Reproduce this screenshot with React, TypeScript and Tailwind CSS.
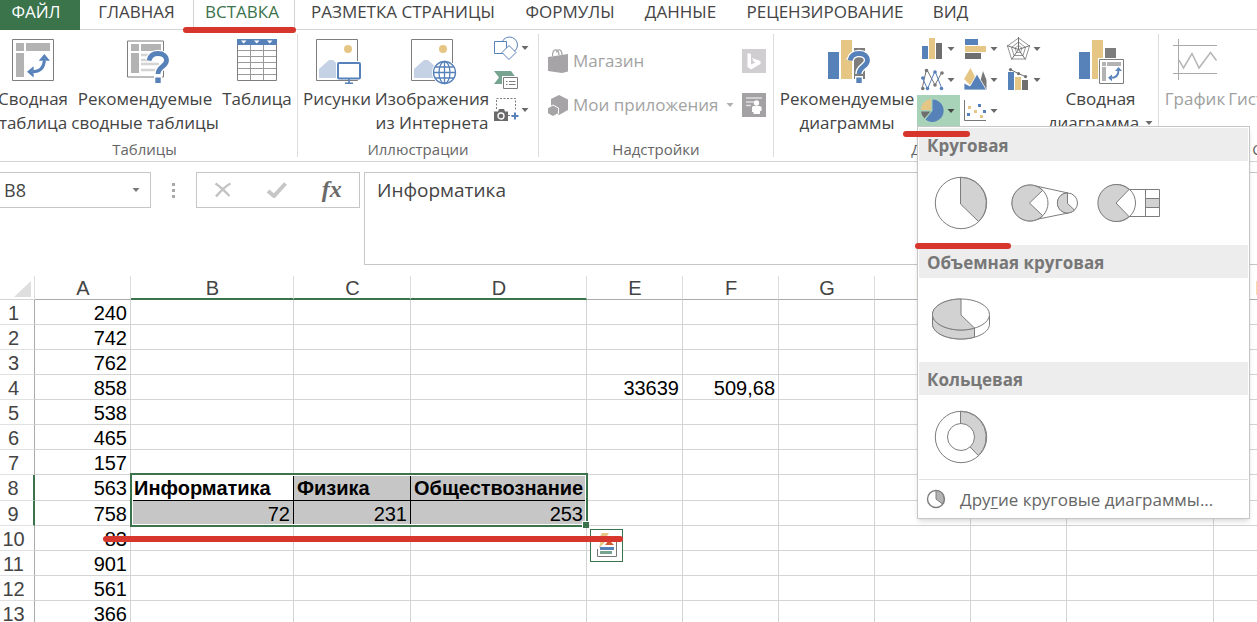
import type { ReactNode } from 'react';

const BLUE = '#5681b9';
const TAN = '#e6c685';
const GRAY = '#7d7d7d';
const LIGHT = '#b3b3b3';

type DrawingProps = { box: string; w: number; h: number; children: ReactNode };

function Drawing({ box, w, h, children }: DrawingProps) {
  return (
    <svg viewBox={box} width={w} height={h} className="shrink-0" fill="none" aria-hidden="true">
      {children}
    </svg>
  );
}

function Caret({ color = '#6a6a6a' }: { color?: string }) {
  return (
    <Drawing box="0 0 8 4" w={8} h={4}>
      <path d="M0.5 0h7L4 4z" fill={color} />
    </Drawing>
  );
}

function SwapArrows({ x, y, s }: { x: number; y: number; s: number }) {
  return (
    <g transform={`translate(${x} ${y}) scale(${s})`}>
      <path d="M5 17.5C13 17.5 17 13 17 5" stroke={BLUE} strokeWidth="3" />
      <path d="M11.5 6.5L17 0l5.500 6.500h-3.500L17 4.500 15 6.500z" fill={BLUE} />
      <path d="M6.500 12L0 17.500l6.500 5.500v-3.500L4.500 17.500l2-2z" fill={BLUE} />
    </g>
  );
}

function Question({ x, y }: { x: number; y: number }) {
  const hook = 'M3 9.500C4 5 7.500 2.500 12 2.500c5 0 8.500 2.500 8.500 7 0 6-8.500 6-8.500 13.500';
  return (
    <g transform={`translate(${x} ${y})`}>
      <path d={hook} stroke="#fff" strokeWidth="7.500" />
      <path d="M8 25h8v8H8z" fill="#fff" />
      <path d={hook} stroke={BLUE} strokeWidth="4.800" />
      <path d="M9.300 26.500h5.400V32H9.300z" fill={BLUE} />
    </g>
  );
}

function PivotIcon() {
  return (
    <Drawing box="0 0 42 42" w={42} h={42}>
      <path d="M.5.5h41v41H.5z" fill="#fff" stroke={GRAY} />
      <path d="M4 4h8v8H4zM14 4h24v8H14zM4 14h8v24H4z" fill={LIGHT} />
      <SwapArrows x={15} y={15} s={1.02} />
    </Drawing>
  );
}

function RecommendedPivotIcon() {
  return (
    <Drawing box="0 0 50 46" w={50} h={46}>
      <path d="M7.500 2h36v36h-36z" fill="#fff" stroke={GRAY} />
      <path d="M11 5h8v7h-8zM21 5h20v7H21zM11 14h8v20h-8z" fill={LIGHT} />
      <path d="M21 16h20M21 21h12M21 25h18M21 31h20" stroke="#d4d4d4" strokeWidth="2.500" />
      <Question x={26} y={12} />
    </Drawing>
  );
}

function TableIcon() {
  return (
    <Drawing box="0 0 40 42" w={40} h={42}>
      <path d="M.5.5h39v41H.5z" fill="#fff" stroke={GRAY} />
      <path d="M0 0h40v6H0z" fill={BLUE} />
      <path d="M4 1.500h5.500L6.700 4.500zM17 1.500h5.500l-2.700 3zM30 1.500h5.500l-2.700 3z" fill="#fff" />
      <path d="M1 11.500h38M1 17.500h38M1 23.500h38M1 29.500h38M1 35.500h38M13.500 6v35M26.500 6v35" stroke="#9a9a9a" />
    </Drawing>
  );
}

function PictureFrame() {
  return (
    <>
      <path d="M.5.5h41v41H.5z" fill="#fff" stroke={GRAY} />
      <circle cx="32" cy="10" r="4" fill={TAN} />
      <path d="M3 39V30l10-9h4l14 13v5z" fill="#c5d2e5" />
    </>
  );
}

function PicturesIcon() {
  return (
    <Drawing box="-4 0 50 46" w={50} h={46}>
      <PictureFrame />
      <path d="M20 22h26v19H20z" fill="#fff" />
      <rect x="22" y="24" width="22" height="15.500" rx="1" fill="#fff" stroke={BLUE} strokeWidth="2" />
      <path d="M33 40v4M29 44.300h8" stroke={BLUE} strokeWidth="1.600" />
    </Drawing>
  );
}

function OnlinePicturesIcon() {
  return (
    <Drawing box="-4 0 50 46" w={50} h={46}>
      <PictureFrame />
      <circle cx="33.500" cy="33.500" r="12.500" fill="#fff" />
      <g stroke={BLUE} strokeWidth="1.300">
        <circle cx="33.500" cy="33.500" r="11" />
        <ellipse cx="33.500" cy="33.500" rx="5.500" ry="11" />
        <path d="M33.500 22.500v22M22.500 33.500h22M24.500 28h18M24.500 39h18" />
      </g>
    </Drawing>
  );
}

function ShapesIcon() {
  return (
    <Drawing box="0 -1 25 25" w={25} h={25}>
      <circle cx="15.500" cy="9" r="8" stroke={BLUE} />
      <path d="M.5 5.500h12v12H.5z" fill="#fff" stroke={BLUE} />
      <path d="M15 9.500l7 7-7 7-7-7z" fill="#fff" stroke={BLUE} />
    </Drawing>
  );
}

function SmartArtIcon() {
  return (
    <Drawing box="0 -1 25 25" w={25} h={25}>
      <path d="M0 4h17l4.500 6H9v7H0l5-6.500z" fill="#76a491" />
      <path d="M8 9h17v14H8z" fill="#fff" />
      <path d="M9.500 10.500h14v11h-14z" fill="#fff" stroke={GRAY} />
      <path d="M12 14.500h1.500M15 14.500h6.500M12 17.500h1.500M15 17.500h6.500" stroke={GRAY} />
    </Drawing>
  );
}

function ScreenshotIcon() {
  return (
    <Drawing box="0 0 25 25" w={25} h={25}>
      <path d="M2.500 12V1.500h19V14M14 18.500h4" stroke={GRAY} strokeDasharray="2 1.500" />
      <path d="M0 14.500h4l1-2.500h5l1 2.500h3V24H0z" fill="#6a6a6a" />
      <circle cx="7" cy="19" r="3" fill="#6a6a6a" stroke="#fff" strokeWidth="1.300" />
      <path d="M21 15.500v7M17.500 19h7" stroke={BLUE} strokeWidth="2" />
    </Drawing>
  );
}

function BagIcon() {
  return (
    <Drawing box="0 0 20 24" w={20} h={24}>
      <path d="M0 8l20-3v17.500l-6 1.500L0 22z" fill="#a6a4a6" />
      <path d="M4.500 7C4.500-1 11-1 11 6M8.500 3.500C9.500-.5 14-.5 14 6" stroke="#a6a4a6" strokeWidth="1.200" />
    </Drawing>
  );
}

function BoxesIcon() {
  return (
    <Drawing box="0 0 20 21" w={20} h={21}>
      <path d="M11 0l9 4.500V15l-9 5-8-5V4z" fill="#a6a4a6" />
      <path d="M5 10l5.500 3v5.500L5 21.500-.5 18.500V13z" fill="#a6a4a6" stroke="#fff" />
    </Drawing>
  );
}

function BingIcon() {
  return (
    <Drawing box="0 0 24 24" w={24} h={24}>
      <path d="M0 0h24v24H0z" fill="#d0ced1" />
      <path d="M5.500 4l3.500 1v10.500l4.500-2-2-1-1.500-3.500 8.500 3v3L9 20.500 5.500 18z" fill="#fff" />
    </Drawing>
  );
}

function PeopleIcon() {
  return (
    <Drawing box="0 0 24 24" w={24} h={24}>
      <path d="M0 0h24v24H0z" fill="#a3a1a4" />
      <path d="M4 5h16M4 9h8M4 12.500h5" stroke="#dedede" strokeWidth="1.700" />
      <circle cx="14.500" cy="10" r="2.700" fill="#fff" />
      <path d="M10 19v-4.500c0-1 1-1.500 2-1.500h5c1 0 2.500.5 2.500 1.500V18H18v3h-6.500v-4.500V19z" fill="#fff" />
    </Drawing>
  );
}

function RecommendedChartsIcon() {
  return (
    <Drawing box="0 0 50 46" w={50} h={46}>
      <path d="M6 13h11v27H6z" fill={BLUE} />
      <path d="M19 1h11v39H19z" fill={TAN} />
      <path d="M32 9h11v31H32z" fill={GRAY} />
      <Question x={25} y={12} />
    </Drawing>
  );
}

function PivotChartIcon() {
  return (
    <Drawing box="0 0 46 46" w={46} h={46}>
      <path d="M1 13h11v27H1z" fill={BLUE} />
      <path d="M14 1h11v39H14z" fill={TAN} />
      <path d="M27 9h11v14H27z" fill={GRAY} />
      <path d="M20 19h26v26H20z" fill="#fff" />
      <path d="M21.500 20.500h24v24h-24z" fill="#fff" stroke={GRAY} />
      <path d="M24 23h4v4h-4zM29 23h14v4H29zM24 28h4v14h-4z" fill={LIGHT} />
      <SwapArrows x={30} y={28} s={0.62} />
    </Drawing>
  );
}

function SparklineIcon() {
  return (
    <Drawing box="0 0 46 42" w={46} h={42}>
      <path d="M1 6.500h44M1 34.500h44M6.500 0v41" stroke="#a9a9a9" />
      <path d="M7 21l4.500 8L20 14.500 27 29 38.500 13.500l6 8" stroke="#b5b5b5" strokeWidth="1.500" />
    </Drawing>
  );
}

function ColumnsIcon() {
  return (
    <Drawing box="0 1 24 24" w={24} h={24}>
      <path d="M1 10h6v13H1z" fill={BLUE} />
      <path d="M8 2h6v21H8z" fill={TAN} />
      <path d="M15 7h6v16h-6z" fill="#6f6f6f" />
    </Drawing>
  );
}

function BarsIcon() {
  return (
    <Drawing box="0 1 24 24" w={24} h={24}>
      <path d="M1 3h13v6H1z" fill={BLUE} />
      <path d="M1 10h21v6H1z" fill={TAN} />
      <path d="M1 17h16v6H1z" fill="#6f6f6f" />
    </Drawing>
  );
}

function RadarIcon() {
  return (
    <Drawing box="0 1 24 24" w={24} h={24}>
      <path d="M11.500 2l11 8-4 13H4.500l-4-13zM11.500 6l7 5.500-2.500 8H7l-2.500-8z" stroke="#949494" />
      <path d="M11.500 9.500l3.500 2.500-1.500 4.500h-4L8 12z" stroke="#a5a5a5" />
      <path d="M11.500 1v12.500L23 9.500M11.500 13.500l7 10M11.500 13.500l-7 10M11.500 13.500L0 9.500" stroke="#6f6f6f" />
    </Drawing>
  );
}

function LinesIcon() {
  return (
    <Drawing box="1 1 24 24" w={24} h={24}>
      <path d="M2 22L6.500 2 15 18 22 5" stroke="#777" />
      <path d="M2 10l5.500 12L15 4l7 18" stroke={BLUE} />
      <g fill="#777">
        <circle cx="2.800" cy="21.500" r="1.800" />
        <circle cx="6.500" cy="3.500" r="1.800" />
        <circle cx="15" cy="18" r="1.800" />
        <circle cx="22" cy="6" r="1.800" />
      </g>
      <g fill={BLUE}>
        <circle cx="2.800" cy="11" r="1.800" />
        <circle cx="7.500" cy="21.500" r="1.800" />
        <circle cx="15" cy="5" r="1.800" />
        <circle cx="21.500" cy="21.500" r="1.800" />
      </g>
    </Drawing>
  );
}

function AreaIcon() {
  return (
    <Drawing box="0 1 24 24" w={24} h={24}>
      <path d="M14 23l5-19 3.500 9v10z" fill="#777" />
      <path d="M0 12L6.500 1 12 12l-6 6z" fill={TAN} />
      <path d="M0 23v-7l6 3 7-12 9.500 16z" fill={BLUE} stroke="#fff" strokeWidth=".8" />
    </Drawing>
  );
}

function ComboIcon() {
  return (
    <Drawing box="0 1 24 24" w={24} h={24}>
      <path d="M1 5h6v18H1z" fill={BLUE} />
      <path d="M8 10h6v13H8z" fill={TAN} />
      <path d="M15 13h6v10h-6z" fill="#6f6f6f" />
      <path d="M3.500 2.600l8 4 7 3" stroke="#6f6f6f" />
      <g fill="#6f6f6f">
        <circle cx="3.500" cy="2.600" r="1.600" />
        <circle cx="11.500" cy="6.600" r="1.600" />
        <circle cx="18.500" cy="9.600" r="1.600" />
      </g>
    </Drawing>
  );
}

function PieIcon() {
  return (
    <Drawing box="2 1 24 24" w={24} h={24}>
      <path d="M13.500 1.500A11.200 11.200 0 1 1 6.500 21.500L13.500 12.700z" fill={BLUE} />
      <path d="M12 1v11H2A11 11 0 0 1 12 1z" fill={TAN} />
      <path d="M2 13.500h9.500L5.500 20.500A11 11 0 0 1 2 13.500z" fill="#6f6f6f" />
    </Drawing>
  );
}

function ScatterIcon() {
  return (
    <Drawing box="0 1 24 24" w={24} h={24}>
      <path d="M.5 2v20.500H22" stroke="#777" />
      <path d="M4 8h3v3H4zM10 12h3v3h-3zM16 17h3v3h-3z" fill={TAN} />
      <path d="M3 15h3v3H3zM14 6h3v3h-3zM19 12h3v3h-3z" fill={BLUE} />
    </Drawing>
  );
}

function PieShape() {
  return (
    <Drawing box="0 0 54 54" w={54} h={54}>
      <circle cx="27" cy="27" r="25.700" fill="#fff" stroke={GRAY} />
      <path d="M26.500 1.300V28l18 17.500A25.700 25.700 0 0 0 26.500 1.300z" fill="#d2d2d2" stroke={GRAY} />
    </Drawing>
  );
}

function PieOfPieShape() {
  return (
    <Drawing box="0 0 68 38" w={68} h={38}>
      <path d="M25 2l32 7M25 35.500l32-6.500" stroke={GRAY} />
      <circle cx="19" cy="19" r="18" fill="#fff" stroke={GRAY} />
      <path d="M31.700 6.300L18.500 19l13.200 12.700A18 18 0 1 1 31.700 6.300z" fill="#d2d2d2" stroke={GRAY} />
      <circle cx="56.500" cy="19" r="10" fill="#fff" stroke={GRAY} />
      <path d="M56.500 9v10.500l7 6.500A10 10 0 1 1 56.500 9z" fill="#d2d2d2" stroke={GRAY} />
    </Drawing>
  );
}

function BarOfPieShape() {
  return (
    <Drawing box="0 0 64 40" w={64} h={40}>
      <circle cx="20" cy="20" r="18.500" fill="#fff" stroke={GRAY} />
      <path d="M32 6.500L19 20l13 13.500A18.500 18.500 0 1 1 32 6.500z" fill="#d2d2d2" stroke={GRAY} />
      <path d="M32 6.500h30.500v27H32M48.500 6.500v27" stroke={GRAY} />
      <path d="M48.500 15.500h14v9h-14z" fill="#d2d2d2" stroke={GRAY} />
    </Drawing>
  );
}

function Pie3dShape() {
  return (
    <Drawing box="0 1 60 44" w={60} h={44}>
      <path d="M1.500 18v9c0 8.500 13 15 28.500 15s28.500-6.500 28.500-15v-9z" fill="#fff" stroke={GRAY} />
      <path d="M1.500 18v9c0 8.500 13 15 28.500 15 5 0 9.500-.7 13.500-2V30z" fill="#d2d2d2" stroke={GRAY} />
      <ellipse cx="30" cy="17.500" rx="28.500" ry="15.500" fill="#fff" stroke={GRAY} />
      <path d="M30 2v16l13.500 13C39 32.500 35 33 30 33 14.300 33 1.500 26 1.500 17.500S14.300 2 30 2z" fill="#d2d2d2" stroke={GRAY} />
    </Drawing>
  );
}

function DonutShape() {
  return (
    <Drawing box="0 0 54 54" w={54} h={54}>
      <circle cx="27" cy="27" r="25.700" fill="#fff" stroke={GRAY} />
      <path d="M26.500 1.300V27l17.800 18.500A25.700 25.700 0 0 0 26.500 1.300z" fill="#d2d2d2" stroke={GRAY} />
      <circle cx="27" cy="27" r="13.500" fill="#fff" stroke={GRAY} />
    </Drawing>
  );
}

function SmallPieShape() {
  return (
    <Drawing box="0 0 20 20" w={20} h={20}>
      <circle cx="10" cy="10" r="8.500" fill="#fff" stroke={GRAY} strokeWidth="1.400" />
      <path d="M10 1.500V10l6.500 5A8.500 8.500 0 0 0 10 1.500z" fill={LIGHT} stroke={GRAY} />
    </Drawing>
  );
}

const tabs = [
  { name: 'ФАЙЛ', look: 'w-20 bg-[#3b734b] pr-2 text-white' },
  { name: 'ГЛАВНАЯ', look: 'w-[113px] border-b border-[#d4d4d4]' },
  { name: 'ВСТАВКА', look: 'w-[102px] border-x border-[#d4d4d4] pr-1 text-[#3b734b]' },
  { name: 'РАЗМЕТКА СТРАНИЦЫ', look: 'w-[216px] border-b border-[#d4d4d4]' },
  { name: 'ФОРМУЛЫ', look: 'w-[118px] border-b border-[#d4d4d4]' },
  { name: 'ДАННЫЕ', look: 'w-[103px] border-b border-[#d4d4d4]' },
  { name: 'РЕЦЕНЗИРОВАНИЕ', look: 'w-[186px] border-b border-[#d4d4d4]' },
  { name: 'ВИД', look: 'w-[65px] border-b border-[#d4d4d4]' },
];

function TabBar() {
  return (
    <nav aria-label="Вкладки" className="flex h-[30px] shrink-0 text-[17px] leading-6">
      {tabs.map((t) => (
        <button key={t.name} type="button" className={`shrink-0 pb-1.5 text-center whitespace-nowrap ${t.look}`}>
          {t.name}
        </button>
      ))}
      <div className="flex-1 border-b border-[#d4d4d4]" />
    </nav>
  );
}

type BigButtonProps = { icon: ReactNode; lines: string[]; width: string; caret?: boolean; muted?: boolean };

function BigButton({ icon, lines, width, caret, muted }: BigButtonProps) {
  return (
    <button
      type="button"
      className={`flex shrink-0 flex-col items-center pt-[9px] text-[17px] leading-6 whitespace-nowrap ${width} ${muted ? 'text-[#a0a0a0]' : ''}`}
    >
      <span className="flex h-12 items-start">{icon}</span>
      {lines.map((line, i) => (
        <span key={line} className="flex items-center gap-1.5">
          {line}
          {caret && i === lines.length - 1 && <Caret />}
        </span>
      ))}
    </button>
  );
}

function SmallButton({ icon, name, caret = true, active = false }: { icon: ReactNode; name: string; caret?: boolean; active?: boolean }) {
  return (
    <button
      type="button"
      aria-label={name}
      className={`flex h-[31px] w-[43px] items-center gap-0.5 pl-1 ${active ? 'bg-[#a8d3b8]' : ''}`}
    >
      {icon}
      {caret && <Caret color={active ? '#444' : '#6a6a6a'} />}
    </button>
  );
}

function Group({ title, width, titleInset = '', children }: { title: string; width: string; titleInset?: string; children: ReactNode }) {
  return (
    <section className={`flex shrink-0 flex-col ${width}`}>
      <div className="flex h-[108px]">{children}</div>
      <h2 className={`text-center text-[15px] leading-6 text-[#666] ${titleInset}`}>{title}</h2>
    </section>
  );
}

function Separator() {
  return <div className="my-1 w-px shrink-0 bg-[#dcdcdc]" />;
}

function MenuHeading({ children }: { children: ReactNode }) {
  return <h3 className="bg-[#ededed] pt-[3px] pl-2 text-[17px] leading-[30px] font-bold text-[#777]">{children}</h3>;
}

function MenuItem({ name, children }: { name: string; children: ReactNode }) {
  return (
    <button type="button" aria-label={name} className="flex size-[84px] items-center justify-center">
      {children}
    </button>
  );
}

function PieMenu() {
  return (
    <div className="absolute top-full left-0 z-20 w-[333px] border border-[#c6c6c6] bg-white p-px text-[#666] shadow-md">
      <MenuHeading>Круговая</MenuHeading>
      <div className="flex">
        <MenuItem name="Круговая"><PieShape /></MenuItem>
        <MenuItem name="Вторичная круговая"><PieOfPieShape /></MenuItem>
        <MenuItem name="Вторичная гистограмма"><BarOfPieShape /></MenuItem>
      </div>
      <MenuHeading>Объемная круговая</MenuHeading>
      <div className="flex">
        <MenuItem name="Объемная круговая"><Pie3dShape /></MenuItem>
      </div>
      <MenuHeading>Кольцевая</MenuHeading>
      <div className="flex">
        <MenuItem name="Кольцевая"><DonutShape /></MenuItem>
      </div>
      <button type="button" className="flex w-full items-center gap-3.5 border-t border-[#e1e1e1] pl-[7px] text-left text-[17px] leading-[35px]">
        <SmallPieShape />
        <span className="pt-0.5">
          Дру<u className="underline-offset-2">г</u>ие круговые диаграммы...
        </span>
      </button>
    </div>
  );
}

function Ribbon() {
  return (
    <div className="flex h-[132px] shrink-0 border-b border-[#d4d4d4]">
      <Group title="Таблицы" width="w-[297px] pr-2">
        <BigButton icon={<PivotIcon />} lines={['Сводная', 'таблица']} width="w-[66px]" />
        <BigButton icon={<RecommendedPivotIcon />} lines={['Рекомендуемые', 'сводные таблицы']} width="w-[158px]" />
        <BigButton icon={<TableIcon />} lines={['Таблица']} width="w-[66px]" />
      </Group>
      <Separator />
      <Group title="Иллюстрации" width="w-60">
        <BigButton icon={<PicturesIcon />} lines={['Рисунки']} width="w-[78px]" />
        <BigButton icon={<OnlinePicturesIcon />} lines={['Изображения', 'из Интернета']} width="w-28" />
        <div className="flex flex-col pt-0.5 pl-0.5">
          <SmallButton icon={<ShapesIcon />} name="Фигуры" />
          <SmallButton icon={<SmartArtIcon />} name="SmartArt" caret={false} />
          <SmallButton icon={<ScreenshotIcon />} name="Снимок" />
        </div>
      </Group>
      <Separator />
      <Group title="Надстройки" width="w-[234px]">
        <div className="flex flex-1 flex-col gap-5 pt-[19px] pr-[7px] pl-[9px] text-[17px] leading-6 text-[#a3a3a3]">
          <div className="flex items-center justify-between">
            <button type="button" className="flex items-center gap-[5px]">
              <BagIcon />
              Магазин
            </button>
            <button type="button" aria-label="Карты Bing"><BingIcon /></button>
          </div>
          <div className="flex items-center justify-between">
            <button type="button" className="flex items-center gap-[5px] whitespace-nowrap">
              <BoxesIcon />
              Мои приложения
            </button>
            <Caret color="#b0b0b0" />
            <button type="button" aria-label="Диаграмма с людьми"><PeopleIcon /></button>
          </div>
        </div>
      </Group>
      <Separator />
      <Group title="Диаграммы" width="w-96" titleInset="pr-6">
        <BigButton icon={<RecommendedChartsIcon />} lines={['Рекомендуемые', 'диаграммы']} width="w-[143px] pl-[3px]" />
        <div className="relative mt-[3px] grid h-[93px] grid-cols-3">
          <SmallButton icon={<ColumnsIcon />} name="Гистограмма" />
          <SmallButton icon={<BarsIcon />} name="Линейчатая" />
          <SmallButton icon={<RadarIcon />} name="Лепестковая" />
          <SmallButton icon={<LinesIcon />} name="График" />
          <SmallButton icon={<AreaIcon />} name="С областями" />
          <SmallButton icon={<ComboIcon />} name="Комбинированная" />
          <SmallButton icon={<PieIcon />} name="Круговая" active />
          <SmallButton icon={<ScatterIcon />} name="Точечная" />
          <PieMenu />
        </div>
        <BigButton icon={<PivotChartIcon />} lines={['Сводная', 'диаграмма']} width="w-[109px]" caret />
      </Group>
      <Separator />
      <Group title="Спарклайны" width="w-[274px] pl-1">
        <BigButton icon={<SparklineIcon />} lines={['График']} width="w-16" muted />
        <BigButton icon={<SparklineIcon />} lines={['Гистограмма']} width="w-[110px]" muted />
      </Group>
    </div>
  );
}

function FormulaBar() {
  return (
    <div className="flex h-[114px] shrink-0 items-start pt-2.5 text-[#444]">
      <div className="flex h-9 w-[151px] items-center border border-l-0 border-[#c6c6c6] pr-2.5">
        <input aria-label="Имя ячейки" defaultValue="B8" className="min-w-0 flex-1 pl-1 text-[18px] leading-7 outline-none" />
        <button type="button" aria-label="Список имен"><Caret color="#777" /></button>
      </div>
      <div className="flex w-[45px] flex-col items-center gap-[3px] pt-[11px]">
        <span className="size-[3px] bg-[#a8a8a8]" />
        <span className="size-[3px] bg-[#a8a8a8]" />
        <span className="size-[3px] bg-[#a8a8a8]" />
      </div>
      <div className="mr-1 flex h-9 w-[164px] items-center justify-around border border-[#c6c6c6]">
        <button type="button" aria-label="Отмена">
          <Drawing box="0 0 18 16" w={18} h={16}>
            <path d="M1.500 1.500c6 4 10 8.500 14 12.500M16.500 1.500C10 5 6 10 2 14.500" stroke="#c3c3c3" strokeWidth="2.400" />
          </Drawing>
        </button>
        <button type="button" aria-label="Ввод">
          <Drawing box="0 0 20 16" w={20} h={16}>
            <path d="M1 9l6 5L18.500 1.500" stroke="#c6c6c6" strokeWidth="4" />
          </Drawing>
        </button>
        <button type="button" aria-label="Вставить функцию" className="pb-0.5 font-['Liberation_Serif',serif] text-[24px] leading-7 font-bold text-[#6a6a6a] italic">
          fx
        </button>
      </div>
      <textarea
        aria-label="Строка формул"
        defaultValue="Информатика"
        className="h-[93px] flex-1 resize-none border border-r-0 border-[#c6c6c6] px-3 py-1 text-[19px] leading-[26px] outline-none"
      />
    </div>
  );
}

const columns = [
  { name: 'A', width: 'w-24' },
  { name: 'B', width: 'w-[163px]' },
  { name: 'C', width: 'w-[117px]' },
  { name: 'D', width: 'w-44' },
  { name: 'E', width: 'w-24' },
  { name: 'F', width: 'w-24' },
  { name: 'G', width: 'w-24' },
  { name: 'H', width: 'w-24' },
  { name: 'I', width: 'w-24' },
  { name: 'J', width: 'w-[147px]' },
  { name: 'K', width: 'w-24' },
];

const columnA = ['240', '742', '762', '858', '538', '465', '157', '563', '758', '83', '901', '561', '366'];

const otherCells: Record<string, string> = {
  E4: '33639',
  F4: '509,68',
  B8: 'Информатика',
  C8: 'Физика',
  D8: 'Обществознание',
  B9: '72',
  C9: '231',
  D9: '253',
};

function cellLook(column: string, row: number) {
  const selected = 'BCD'.includes(column) && (row === 8 || row === 9);
  if (!selected) return 'border-[#d4d4d4] text-right';
  const side = column === 'D' ? 'border-r-[#d4d4d4]' : 'border-r-black';
  const fill = column === 'B' && row === 8 ? 'bg-white' : 'bg-[#c6c6c6]';
  return row === 8 ? `${side} ${fill} border-b-black text-left font-bold` : `${side} ${fill} border-b-[#d4d4d4] text-right`;
}

function Sheet() {
  return (
    <div className="relative min-h-0 flex-1 overflow-hidden font-['Liberation_Sans',sans-serif] text-[20px] leading-[22px]">
      <table className="w-[1310px] table-fixed border-separate border-spacing-0 text-black">
        <colgroup>
          <col className="w-[35px]" />
          {columns.map((c) => (
            <col key={c.name} className={c.width} />
          ))}
        </colgroup>
        <thead>
          <tr className="h-6 text-[#444]">
            <th aria-label="Выделить все" className="border-r border-b border-r-[#dcdcdc] border-b-[#d4d4d4] p-0">
              <Drawing box="0 0 32 20" w={32} h={20}>
                <path d="M31 3v16H14z" fill="#dedede" />
              </Drawing>
            </th>
            {columns.map((c) => (
              <th
                key={c.name}
                scope="col"
                className={`border-r border-r-[#dcdcdc] p-0 pl-px font-normal ${'BCD'.includes(c.name) ? 'border-b-2 border-b-[#3b734b] pt-0.5 leading-5' : 'border-b border-b-[#ababab] pt-px leading-[22px]'}`}
              >
                {c.name}
              </th>
            ))}
          </tr>
        </thead>
        <tbody>
          {columnA.map((value, i) => {
            const row = i + 1;
            const marked = row === 8 || row === 9;
            const inset = row === 8 ? 'pt-px' : 'pt-0.5';
            return (
              <tr key={row} className={row === 8 ? 'h-[26px]' : 'h-[25px]'}>
                <th
                  scope="row"
                  className={`border-b border-b-[#e1e1e1] pr-[7px] pb-0 pl-0 font-normal text-[#444] ${inset} ${marked ? 'border-r-2 border-r-[#3b734b]' : 'border-r border-r-[#ababab]'}`}
                >
                  {row}
                </th>
                {columns.map((c) => (
                  <td key={c.name} className={`border-r border-b px-[3px] pb-0 whitespace-nowrap ${inset} ${cellLook(c.name, row)}`}>
                    {c.name === 'A' ? value : otherCells[c.name + row]}
                  </td>
                ))}
              </tr>
            );
          })}
        </tbody>
      </table>
      <div className="pointer-events-none absolute top-[197px] left-[130px] h-[54px] w-[458px] border-2 border-[#3b734b] inset-shadow-[0_0_0_1px_#fff]">
        <div className="absolute -right-[3px] -bottom-[3px] size-[7px] border-t border-l border-white bg-[#3b734b]" />
      </div>
      <button type="button" aria-label="Быстрый анализ" className="absolute top-[253px] left-[590px] flex size-[33px] items-center justify-center border border-[#3b734b] bg-white">
        <Drawing box="0 0 24 26" w={24} h={26}>
          <path d="M2.500 16v7.500h19V8" stroke="#777" />
          <path d="M14 7l5 5h-9z" fill="#d0592f" />
          <path d="M7 0h7l-4 6h3L4 15l2-8H3z" fill={TAN} />
          <path d="M5 14h14v3H5z" fill={BLUE} />
          <path d="M5 18h12v3H5z" fill="#76a491" />
        </Drawing>
      </button>
    </div>
  );
}

function Marks() {
  return (
    <div className="pointer-events-none" aria-hidden="true">
      <div className="absolute top-[27px] left-[183px] z-30 h-1.5 w-[113px] rounded-full bg-[#d6362b]" />
      <div className="absolute top-[131px] left-[903px] z-30 h-1.5 w-[67px] rounded-full bg-[#d6362b]" />
      <div className="absolute top-[243px] left-[915px] z-30 h-1.5 w-24 rounded-full bg-[#d6362b]" />
      <div className="absolute top-[536px] left-[103px] z-30 h-1.5 w-[520px] rounded-full bg-[#d6362b]" />
    </div>
  );
}

export default function App() {
  return (
    <main className="relative flex h-screen flex-col overflow-hidden bg-white font-['Open_Sans','Noto_Sans',sans-serif] text-[#444]">
      <TabBar />
      <Ribbon />
      <FormulaBar />
      <Sheet />
      <Marks />
    </main>
  );
}
